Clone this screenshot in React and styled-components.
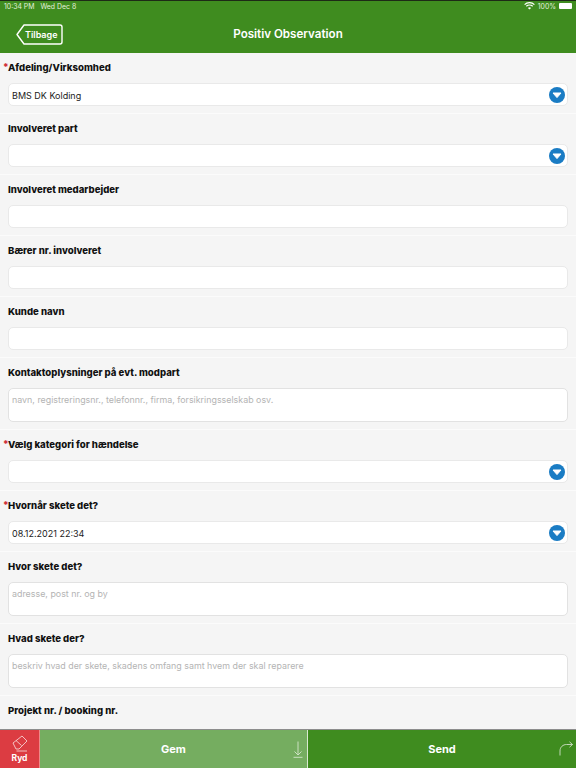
import React from "react";
import { styled, createGlobalStyle } from "styled-components";

const fields = [
  { label: "Afdeling/Virksomhed", required: true, kind: "select", value: "BMS DK Kolding" },
  { label: "Involveret part", kind: "select" },
  { label: "Involveret medarbejder", kind: "input" },
  { label: "Bærer nr. involveret", kind: "input" },
  { label: "Kunde navn", kind: "input" },
  { label: "Kontaktoplysninger på evt. modpart", kind: "area", hint: "navn, registreringsnr., telefonnr., firma, forsikringsselskab osv." },
  { label: "Vælg kategori for hændelse", required: true, kind: "select" },
  { label: "Hvornår skete det?", required: true, kind: "select", value: "08.12.2021 22:34" },
  { label: "Hvor skete det?", kind: "area", hint: "adresse, post nr. og by" },
  { label: "Hvad skete der?", kind: "area", hint: "beskriv hvad der skete, skadens omfang samt hvem der skal reparere" },
  { label: "Projekt nr. / booking nr.", kind: "none" },
];

const App = () => {
  return (
    <Screen>
      <GlobalStyle />
      <Header>
        <StatusBar>
          <StatusGroup>
            <span>10:34 PM</span>
            <span>Wed Dec 8</span>
          </StatusGroup>
          <StatusGroup $tight>
            <svg width="11" height="8" viewBox="0 0 11 8" fill="none" stroke="#fff" strokeWidth="1.2">
              <path d="M0.6 2.6a7 7 0 0 1 9.8 0" />
              <path d="M2.3 4.3a4.6 4.6 0 0 1 6.4 0" />
              <path d="M5.5 7.6L3.9 5.9a2.3 2.3 0 0 1 3.2 0z" fill="#fff" stroke="none" />
            </svg>
            <span>100%</span>
            <Battery />
          </StatusGroup>
        </StatusBar>
        <NavBar>
          <BackButton>
            <svg width="47" height="21" viewBox="0 0 47 21" fill="none">
              <path
                d="M8 1H44a2 2 0 0 1 2 2V18a2 2 0 0 1-2 2H8L1 10.5z"
                stroke="#fff"
                strokeWidth="1.4"
                strokeLinejoin="round"
              />
            </svg>
            <BackLabel>Tilbage</BackLabel>
          </BackButton>
          <Title>Positiv Observation</Title>
        </NavBar>
      </Header>

      <Form>
        {fields.map(field => (
          <Section key={field.label}>
            <Label>
              {field.required && <Star>*</Star>}
              {field.label}
            </Label>
            {field.kind === "area" && (
              <TextBox>
                <Hint>{field.hint}</Hint>
              </TextBox>
            )}
            {(field.kind === "input" || field.kind === "select") && (
              <InputBox>
                <Value>{field.value}</Value>
                {field.kind === "select" && (
                  <svg width="16" height="16" viewBox="0 0 16 16">
                    <circle cx="8" cy="8" r="8" fill="#1a7cc4" />
                    <path d="M4 6H12L8 10.6z" fill="#fff" stroke="#fff" strokeLinejoin="round" />
                  </svg>
                )}
              </InputBox>
            )}
          </Section>
        ))}
      </Form>

      <Footer>
        <ClearButton>
          <svg width="16" height="17" viewBox="0 0 16 17" fill="none" stroke="#f8e2e2" strokeWidth="0.8">
            <path d="M1 8L10 1l5 5-8 8H4z" />
            <path d="M4 5.5l5.5 5" />
            <path d="M4.5 16H15" />
          </svg>
          <span>Ryd</span>
        </ClearButton>
        <SaveButton>
          <span>Gem</span>
          <SaveIcon width="10" height="17" viewBox="0 0 10 17" fill="none" stroke="#d5e6cb" strokeWidth="0.9">
            <path d="M5 0.5V14M1.5 10.5L5 14l3.5-3.5" />
            <path d="M0.5 16.3h9" />
          </SaveIcon>
        </SaveButton>
        <SendButton>
          <span>Send</span>
          <SendIcon width="14" height="15" viewBox="0 0 14 15" fill="none" stroke="#cfe0c6" strokeWidth="0.9">
            <path d="M1 14.5V10C1 6 4 3.5 7.5 3.5h6" />
            <path d="M10.5 0.8l3 2.7-3 2.7" />
          </SendIcon>
        </SendButton>
      </Footer>
    </Screen>
  );
};

export default App;

const GlobalStyle = createGlobalStyle`
  html, body {
    margin: 0;
    padding: 0;
    background: #f5f5f5;
  }
  * {
    box-sizing: border-box;
  }
`;

const Screen = styled.div`
  width: 576px;
  height: 768px;
  display: flex;
  flex-direction: column;
  overflow: hidden;
  background: #f5f5f5;
  font-family: Inter, "Liberation Sans", sans-serif;
  color: #111;
`;

const Header = styled.header`
  height: 53px;
  flex-shrink: 0;
  background: #3f8c1f;
  border-top: 1px solid #1d2a16;
  color: #fff;
`;

const StatusBar = styled.div`
  height: 10px;
  padding: 0 3px 0 4px;
  display: flex;
  align-items: center;
  justify-content: space-between;
  font-size: 6.9px;
  color: #e4f0dc;
`;

const StatusGroup = styled.div`
  display: flex;
  align-items: center;
  gap: ${props => (props.$tight ? "3px" : "6px")};
`;

const Battery = styled.div`
  width: 13px;
  height: 6px;
  background: #fff;
  border-radius: 1px;
  margin-right: 1px;
`;

const NavBar = styled.div`
  position: relative;
  height: 42px;
  padding: 13px 0 0 16px;
`;

const BackButton = styled.div`
  position: relative;
  width: 47px;
  height: 21px;
`;

const BackLabel = styled.span`
  position: absolute;
  left: 9px;
  top: 4px;
  font-size: 9px;
  line-height: 13px;
  font-weight: 600;
`;

const Title = styled.h1`
  position: absolute;
  left: 0;
  right: 0;
  top: 14px;
  margin: 0;
  text-align: center;
  font-size: 11.6px;
  line-height: 18px;
  font-weight: 600;
`;

const Form = styled.main`
  flex: 1;
  min-height: 0;
  overflow: hidden;
`;

const Section = styled.section`
  padding: 7px 8px 7px;
  border-bottom: 1px solid #fbfbfb;
`;

const Label = styled.div`
  position: relative;
  height: 15px;
  margin-bottom: 8px;
  font-size: 9.6px;
  line-height: 15px;
  font-weight: 800;
  color: #111;
`;

const Star = styled.span`
  position: absolute;
  left: -5px;
  top: -1px;
  color: #d0303a;
`;

const InputBox = styled.div`
  height: 23px;
  padding: 0 2px 0 3px;
  display: flex;
  align-items: center;
  justify-content: space-between;
  background: #fff;
  border: 1px solid #e9e9e9;
  border-radius: 5px;
  font-size: 9px;
  color: #222;
`;

const Value = styled.span`
  margin-top: 1px;
`;

const TextBox = styled.div`
  height: 34px;
  padding: 5px 3px;
  background: #fff;
  border: 1px solid #e2e2e2;
  border-radius: 5px;
`;

const Hint = styled.span`
  display: block;
  font-size: 8.9px;
  line-height: 12px;
  color: #b4b4b4;
`;

const Footer = styled.footer`
  height: 39px;
  flex-shrink: 0;
  display: flex;
  border-top: 1px solid #8d8d8d;
  color: #fff;
  font-weight: 700;
`;

const ClearButton = styled.div`
  width: 40px;
  display: flex;
  flex-direction: column;
  align-items: center;
  justify-content: center;
  gap: 1px;
  background: #dc3c42;
  border-right: 1px solid #e88;
  font-size: 8.5px;
  line-height: 10px;
`;

const SaveButton = styled.div`
  position: relative;
  width: 268px;
  display: flex;
  align-items: center;
  justify-content: center;
  background: #75ad60;
  border-right: 1px solid #d8e8d0;
  font-size: 11px;
`;

const SendButton = styled.div`
  position: relative;
  flex: 1;
  display: flex;
  align-items: center;
  justify-content: center;
  background: #3f8c1f;
  font-size: 11px;
`;

const SaveIcon = styled.svg`
  position: absolute;
  right: 4px;
  bottom: 10px;
`;

const SendIcon = styled.svg`
  position: absolute;
  right: 3px;
  bottom: 12px;
`;
